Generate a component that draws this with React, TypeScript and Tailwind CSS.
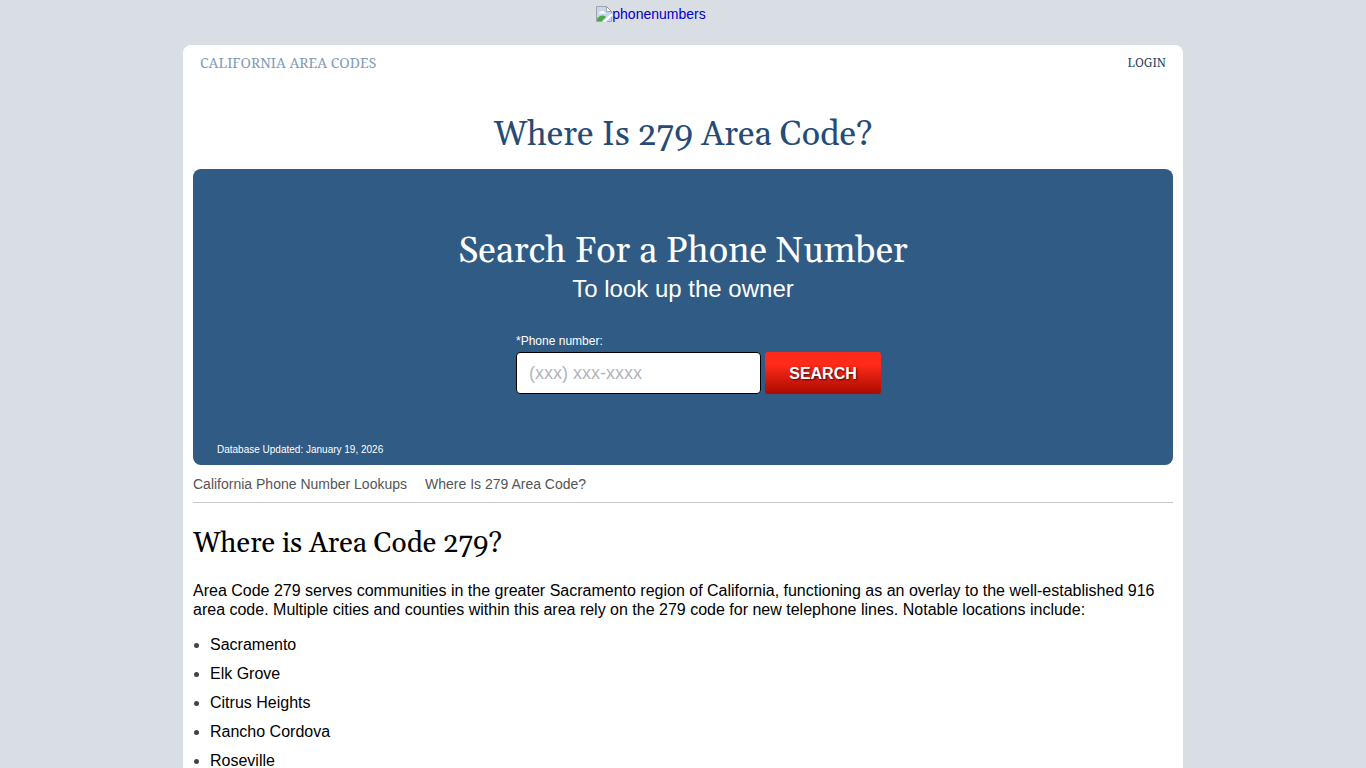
import { useState } from "react";

const CITIES = [
  "Sacramento",
  "Elk Grove",
  "Citrus Heights",
  "Rancho Cordova",
  "Roseville",
];

function BrokenImageIcon() {
  return (
    <svg width="16" height="16" viewBox="0 0 16 16" aria-hidden="true">
      <path d="M0.5 0.5h10l5 5v10H0.5z" fill="#c6d6f3" stroke="#a3a3a3" />
      <path d="M10.5 0.5v5h5z" fill="#fff" stroke="#a3a3a3" />
      <path d="M3 7.5c0-1.500 1-2 2-2 .5-1 2.500-1 3 .5 1 0 1.500.7 1.500 1.500z" fill="#fff" />
      <path d="M1 15v-2c2-3.500 6-4.500 9-2l-4 4z" fill="#4caa43" />
      <path d="M6 16L16 7v3l-6 6z" fill="#fff" />
      <path d="M11 15l4-4v4z" fill="#c6d6f3" />
    </svg>
  );
}

function SearchPanel() {
  const [phone, setPhone] = useState("");

  return (
    <section className="rounded-lg bg-[#305b85] px-6 pt-14 pb-[7px] text-white">
      <h2 className="pt-0.5 text-center font-[Georgia,Gelasio,serif] text-4xl leading-[50px]">
        Search For a Phone Number
      </h2>
      <p className="text-center text-2xl leading-6">To look up the owner</p>
      <form
        className="mx-auto mt-[30px] w-[398px] pl-8"
        onSubmit={(e) => e.preventDefault()}
      >
        <label htmlFor="phone" className="block text-xs leading-5">
          *Phone number:
        </label>
        <div className="mt-px flex gap-1">
          <input
            id="phone"
            name="phone"
            type="tel"
            placeholder="(xxx) xxx-xxxx"
            value={phone}
            onChange={(e) => setPhone(e.target.value)}
            className="h-[42px] w-[245px] rounded border border-black bg-white px-3 text-lg text-black placeholder:text-[#b0b5bc]"
          />
          <button
            type="submit"
            className="h-[42px] w-[116px] cursor-pointer rounded-[3px] bg-linear-to-b from-[#ff2a1a] from-30% to-[#aa0900] font-bold text-white text-shadow-[1px_1px_2px_#000000b3]"
          >
            SEARCH
          </button>
        </div>
      </form>
      <p className="mt-12 text-[10px] leading-4">
        Database Updated: January 19, 2026
      </p>
    </section>
  );
}

export default function App() {
  return (
    <div className="flex min-h-screen flex-col bg-[#d9dde4] font-['Liberation_Sans',Arial,sans-serif] text-base leading-[19px] text-black">
      <header className="flex h-[45px] justify-center pt-1.5">
        <a href="#" className="mr-16 flex h-4 items-center text-sm text-[#0000cc]">
          <BrokenImageIcon />
          phonenumbers
        </a>
      </header>
      <main className="mx-auto w-full max-w-[1000px] flex-1 rounded-t-lg bg-white px-2.5">
        <nav className="flex items-center justify-between px-[7px] pt-2 font-['Noto_Serif',Cambria,serif] leading-5">
          <a href="#" className="text-sm text-[#7f9cb9]">
            CALIFORNIA AREA CODES
          </a>
          <a href="#" className="text-xs text-[#2c4562]">
            LOGIN
          </a>
        </nav>
        <h1 className="mt-[38px] mb-2.5 text-center font-[Georgia,Gelasio,serif] text-[34px] leading-[48px] text-[#264b76]">
          Where Is 279 Area Code?
        </h1>
        <SearchPanel />
        <nav className="flex gap-[18px] border-b border-[#c8c8c8] pt-2.5 pb-2 text-sm leading-[19px] text-[#555]">
          <a href="#">California Phone Number Lookups</a>
          <span>Where Is 279 Area Code?</span>
        </nav>
        <h2 className="mt-[21px] font-[Georgia,Gelasio,serif] text-[28px] leading-10">
          Where is Area Code 279?
        </h2>
        <p className="mt-[17px]">
          Area Code 279 serves communities in the greater Sacramento region of
          California, functioning as an overlay to the well-established 916 area
          code. Multiple cities and counties within this area rely on the 279
          code for new telephone lines. Notable locations include:
        </p>
        <ul className="mt-4 list-disc space-y-2.5 pl-[17px] marker:text-[#444]">
          {CITIES.map((city) => (
            <li key={city}>{city}</li>
          ))}
        </ul>
      </main>
    </div>
  );
}
